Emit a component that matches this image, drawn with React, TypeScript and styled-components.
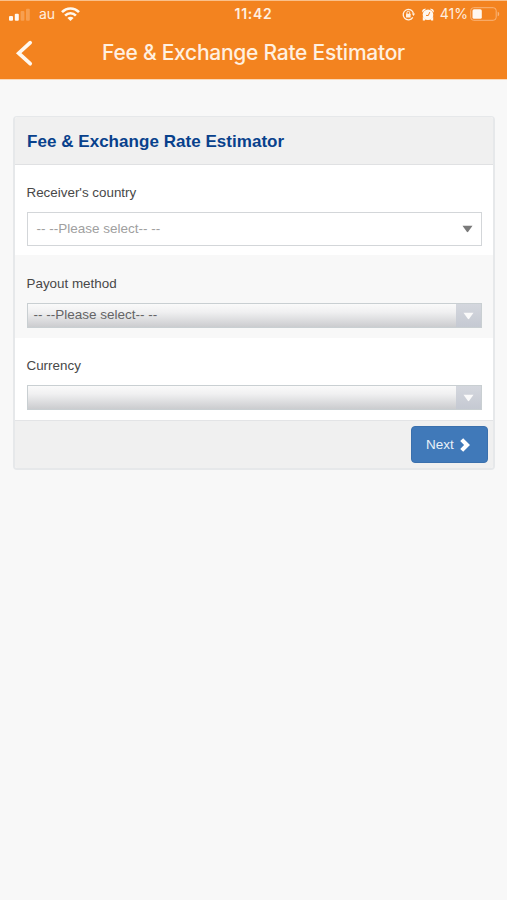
import React from "react";
import styled, { createGlobalStyle } from "styled-components";

const GlobalStyle = createGlobalStyle`
  * { box-sizing: border-box; }
  body {
    margin: 0;
    background: #f8f8f8;
    font-family: "Liberation Sans", Arial, sans-serif;
  }
`;

const Screen = styled.div`
  width: 507px;
  height: 900px;
  overflow: hidden;
  background: #f8f8f8;
`;

const TopBar = styled.header`
  height: 80px;
  background: #f3831f;
  border-top: 1px solid #fac08a;
  border-bottom: 1px solid #fbd9b8;
  color: #fff0e0;
  font-family: Inter, sans-serif;
`;

const StatusBar = styled.div`
  display: grid;
  grid-template-columns: 1fr auto 1fr;
  align-items: center;
  height: 26px;
  padding: 0 7px 0 9px;
`;

const StatusGroup = styled.div<{ $end?: boolean }>`
  display: flex;
  align-items: center;
  justify-content: ${(p) => (p.$end ? "flex-end" : "flex-start")};
  height: 26px;
`;

const Carrier = styled.span`
  width: 17px;
  margin: 0 5px 0 9px;
  font-size: 14px;
  line-height: 20px;
`;

const Clock = styled.span`
  margin-right: 2px;
  font-size: 14px;
  font-weight: 600;
  letter-spacing: 0.7px;
  line-height: 20px;
`;

const StatusIcon = styled.span`
  display: flex;
  margin-left: 7px;
`;

const Percent = styled.span`
  margin: 0 2px 0 6px;
  font-size: 14px;
  line-height: 20px;
`;

const NavBar = styled.div`
  display: grid;
  grid-template-columns: 48px 1fr 48px;
  align-items: center;
  height: 52px;
`;

const BackButton = styled.button`
  display: flex;
  align-items: center;
  height: 52px;
  padding: 0 0 0 15px;
  border: 0;
  background: none;
`;

const NavTitle = styled.h1`
  margin: 0;
  text-align: center;
  font-size: 21px;
  font-weight: 500;
  letter-spacing: -0.26px;
  line-height: 28px;
  white-space: nowrap;
`;

const Panel = styled.main`
  width: 482px;
  margin: 36px 0 0 13px;
  border: 2px solid #e6e8ea;
  border-top-width: 1px;
  border-radius: 4px;
  background: #fff;
  overflow: hidden;
`;

const PanelHeader = styled.div`
  display: flex;
  align-items: center;
  height: 48px;
  padding: 2px 12px 0;
  background: #f0f0f0;
  border-bottom: 1px solid #e0e1e3;
`;

const PanelTitle = styled.h2`
  margin: 0;
  color: #08418c;
  font-size: 17px;
  font-weight: 700;
  letter-spacing: 0.04px;
  line-height: 24px;
  white-space: nowrap;
`;

const Field = styled.div<{ $height: number; $shaded?: boolean }>`
  height: ${(p) => p.$height}px;
  padding: ${(p) => (p.$shaded ? 20 : 19)}px 12px 0;
  background: ${(p) => (p.$shaded ? "#f8f8f8" : "#fff")};
`;

const Label = styled.div`
  height: 18px;
  margin-left: -0.5px;
  color: #484848;
  font-size: 13.4px;
  line-height: 18px;
`;

const Select = styled.div`
  display: flex;
  align-items: center;
  justify-content: space-between;
  width: 455px;
  height: 34px;
  margin: 9.5px 0 0 -0.5px;
  padding: 0 8px 0 9px;
  border: 1.5px solid #d3d6d9;
  background: #fff;
  color: #a0a0a0;
  font-size: 13.5px;
`;

const DisabledSelect = styled.div`
  display: flex;
  justify-content: space-between;
  width: 455px;
  height: 25px;
  margin: 10px 0 0 -0.5px;
  padding-left: 6px;
  border: 1px solid #c9cfd2;
  background: linear-gradient(#fafafa 0%, #f0f0f1 35%, #cbcccf 100%);
  color: #646466;
  font-size: 13.5px;
  line-height: 22px;
`;

const SelectArrow = styled.span`
  display: flex;
  align-items: center;
  justify-content: center;
  width: 25px;
  height: 23px;
  background: linear-gradient(#d4d7de, #c5c9d2);
`;

const PanelFooter = styled.div`
  display: flex;
  justify-content: flex-end;
  height: 48px;
  padding: 5px 5.5px 0;
  border-top: 1px solid #e3e4e6;
  background: #f0f0f0;
`;

const NextButton = styled.button`
  display: flex;
  align-items: center;
  width: 77px;
  height: 37px;
  padding: 0 0 0 14.5px;
  border: 1px solid #3a70ad;
  border-radius: 4px;
  background: #4079b9;
  color: #e8f0f8;
  font-family: inherit;
  font-size: 13.5px;
  gap: 5px;
`;

const Signal = () => (
  <svg width="21" height="13" viewBox="0 0 21 13">
    <rect x="0" y="8" width="4" height="4.8" rx="1" fill="#fff8ef" />
    <rect x="5.8" y="5.7" width="4" height="7.1" rx="1" fill="#fff8ef" />
    <rect x="11.6" y="3" width="3.8" height="9.8" rx="1" fill="#f79f50" />
    <rect x="17" y="0.7" width="3.8" height="12.1" rx="1" fill="#f79f50" />
  </svg>
);

const Wifi = () => (
  <svg width="19" height="14" viewBox="0 0 19 14" fill="none" stroke="#fff8ef" strokeWidth="2.6">
    <path d="M1 5.2C5.8.2 13.2.2 18 5.2" />
    <path d="M4.1 8.6c3-3.1 7.8-3.1 10.8 0" />
    <path d="M9.5 14 6.4 10.9c1.7-1.7 4.5-1.7 6.2 0z" fill="#fff8ef" stroke="none" />
  </svg>
);

const RotationLock = () => (
  <svg width="13" height="13" viewBox="0 0 13 13" fill="none" stroke="#fff1e2" strokeWidth="1.3">
    <path d="M10.8 9.4A5.2 5.2 0 1 1 11.5 5.6" />
    <path d="M9.8 5.4h3.2L11.6 8z" fill="#fff1e2" stroke="none" />
    <rect x="4" y="5.8" width="4.6" height="3.6" rx=".5" fill="#fff1e2" stroke="none" />
    <path d="M4.9 6V4.7a1.4 1.4 0 0 1 2.8 0V6" strokeWidth="1" />
  </svg>
);

const Alarm = () => (
  <svg width="12" height="13" viewBox="0 0 12 13" fill="#fff8ef">
    <circle cx="6" cy="6.8" r="5.3" />
    <path d="M.4 4.6C-.4 1.7 1.4.2 4.2.8zM11.6 4.6C12.4 1.7 10.6.2 7.8.8zM.8 8.5l2.8 3-.9 1H.8zM11.2 8.5l-2.8 3 .9 1h1.9z" />
    <path d="M7.8 4.1 6.3 7.5 4 7.4" fill="none" stroke="#f4831f" strokeWidth="1" />
  </svg>
);

const Battery = () => (
  <svg width="30" height="14" viewBox="0 0 30 14">
    <rect x=".7" y=".7" width="25.5" height="12.6" rx="3" fill="none" stroke="#f9b478" strokeWidth="1" />
    <rect x="2.5" y="2.3" width="9.3" height="9.4" rx="1.5" fill="#fff8ef" />
    <path d="M27.7 4.7c2 .5 2 4.1 0 4.6z" fill="#f9b478" />
  </svg>
);

const BackChevron = () => (
  <svg width="18" height="27" viewBox="0 0 18 27" fill="none">
    <path d="M15.2 2.7 3.7 13.2 15.2 23.7" stroke="#fff8ef" strokeWidth="3.7" strokeLinecap="round" strokeLinejoin="miter" />
  </svg>
);

const Triangle = ({ color }: { color: string }) => (
  <svg width="11" height="8" viewBox="0 0 11 8">
    <path d="M.5.8h10L6.2 6.7q-.7.9-1.4 0z" fill={color} />
  </svg>
);

const NextChevron = () => (
  <svg width="12" height="14" viewBox="0 0 12 14">
    <path d="M1.2 3.1 4.2.3 11 7l-6.8 6.7-3-2.8L5.1 7z" fill="#fff" />
  </svg>
);

export default function App() {
  return (
    <Screen>
      <GlobalStyle />
      <TopBar>
        <StatusBar>
          <StatusGroup>
            <Signal />
            <Carrier>au</Carrier>
            <Wifi />
          </StatusGroup>
          <Clock>11:42</Clock>
          <StatusGroup $end>
            <RotationLock />
            <StatusIcon>
              <Alarm />
            </StatusIcon>
            <Percent>41%</Percent>
            <Battery />
          </StatusGroup>
        </StatusBar>
        <NavBar>
          <BackButton aria-label="Back">
            <BackChevron />
          </BackButton>
          <NavTitle>Fee &amp; Exchange Rate Estimator</NavTitle>
        </NavBar>
      </TopBar>
      <Panel>
        <PanelHeader>
          <PanelTitle>Fee &amp; Exchange Rate Estimator</PanelTitle>
        </PanelHeader>
        <Field $height={90}>
          <Label>Receiver's country</Label>
          <Select>
            <span>-- --Please select-- --</span>
            <Triangle color="#7a7a7a" />
          </Select>
        </Field>
        <Field $height={83} $shaded>
          <Label>Payout method</Label>
          <DisabledSelect>
            <span>-- --Please select-- --</span>
            <SelectArrow>
              <Triangle color="#fafafa" />
            </SelectArrow>
          </DisabledSelect>
        </Field>
        <Field $height={82}>
          <Label>Currency</Label>
          <DisabledSelect>
            <span />
            <SelectArrow>
              <Triangle color="#fafafa" />
            </SelectArrow>
          </DisabledSelect>
        </Field>
        <PanelFooter>
          <NextButton>
            Next
            <NextChevron />
          </NextButton>
        </PanelFooter>
      </Panel>
    </Screen>
  );
}
